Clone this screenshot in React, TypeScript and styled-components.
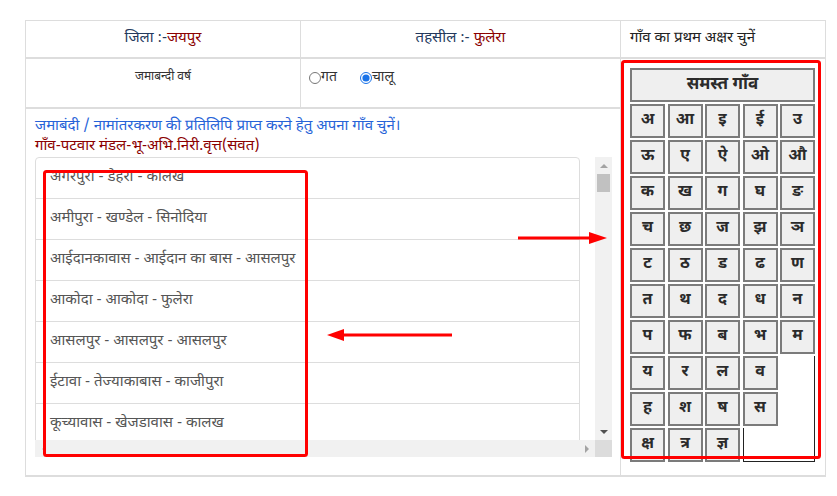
import React from "react";
import styled, { createGlobalStyle } from "styled-components";

const GlobalStyle = createGlobalStyle`
  html, body { margin: 0; padding: 0; background: #ffffff; }
  body {
    font-family: "Noto Sans Devanagari", "Noto Sans", "Liberation Sans", sans-serif;
    color: #333333;
  }
  * { box-sizing: border-box; }
`;

const Page = styled.div`
  position: relative;
  width: 837px;
  height: 496px;
  padding: 20px 0 0 25px;
  overflow: hidden;
`;

const InfoTable = styled.div`
  display: grid;
  grid-template-columns: 275px 320px 204px;
  grid-template-rows: 38px 50px 366px;
  width: 801px;
  border: 1px solid #dddddd;
  border-bottom-width: 2px;
`;

const Cell = styled.div<{ $right?: boolean; $bottom?: boolean }>`
  border-right: ${(p) => (p.$right ? "1px solid #dddddd" : "none")};
  border-bottom: ${(p) => (p.$bottom ? "2px solid #dddddd" : "none")};
  min-width: 0;
`;

const HeadCell = styled(Cell)<{ $align?: "center" | "left" }>`
  display: flex;
  align-items: center;
  justify-content: ${(p) => (p.$align === "left" ? "flex-start" : "center")};
  padding: 0 9px;
  font-size: 15px;
  line-height: 20px;
  color: #222222;
`;

const Label = styled.span`
  color: #23395d;
`;

const Value = styled.span`
  color: #8b0000;
`;

const YearLabelCell = styled(Cell)`
  padding-top: 10px;
  text-align: center;
  font-size: 12px;
  line-height: 17px;
  color: #333333;
`;

const RadioCell = styled(Cell)`
  display: flex;
  align-items: flex-start;
  padding: 10px 0 0 8px;
`;

const RadioLabel = styled.label`
  display: inline-flex;
  align-items: center;
  font-size: 14px;
  line-height: 18px;
  color: #333333;
  margin-right: 23px;

  input {
    margin: 0;
    width: 12px;
    height: 12px;
    accent-color: #1a73e8;
  }
`;

const VillageCell = styled(Cell)`
  grid-column: 1 / 3;
  padding: 8px 8px 0 9px;
  display: flex;
  flex-direction: column;
`;

const Intro = styled.div`
  font-size: 15px;
  line-height: 20px;
  color: #2763d8;
  white-space: nowrap;
`;

const ColumnTitle = styled.div`
  font-size: 15px;
  line-height: 20px;
  color: #8b0000;
  white-space: nowrap;
`;

const ScrollFrame = styled.div`
  display: grid;
  grid-template-columns: 560px 17px;
  grid-template-rows: 283px 17px;
  width: 577px;
  height: 300px;
`;

const Viewport = styled.div`
  overflow: hidden;
`;

const VScrollbar = styled.div`
  display: flex;
  flex-direction: column;
  background: #f1f1f1;
`;

const HScrollbar = styled.div`
  display: flex;
  justify-content: space-between;
  background: #f1f1f1;
`;

const ScrollCorner = styled.div`
  background: #dcdcdc;
`;

const ArrowButton = styled.div`
  flex: 0 0 17px;
  width: 17px;
  height: 17px;
  display: flex;
  align-items: center;
  justify-content: center;
`;

const Track = styled.div`
  flex: 1;
  display: flex;
  flex-direction: column;
`;

const Thumb = styled.div`
  height: 18px;
  margin: 0 2px;
  background: #c1c1c1;
`;

type Dir = "up" | "down" | "left" | "right";

const Triangle = styled.span<{ $dir: Dir; $color: string }>`
  width: 0;
  height: 0;
  border-style: solid;
  border-color: transparent;
  ${(p) =>
    p.$dir === "up"
      ? `border-width: 0 4px 4px 4px; border-bottom-color: ${p.$color};`
      : p.$dir === "down"
      ? `border-width: 4px 4px 0 4px; border-top-color: ${p.$color};`
      : p.$dir === "left"
      ? `border-width: 4px 4px 4px 0; border-right-color: ${p.$color};`
      : `border-width: 4px 0 4px 4px; border-left-color: ${p.$color};`}
`;

const VillageList = styled.ul`
  list-style: none;
  margin: 0;
  padding: 0;
  width: 545px;
`;

const VillageItem = styled.li`
  border: 1px solid #dddddd;
  margin-bottom: -1px;
  padding: 10px 14px;
  font-size: 15px;
  line-height: 20px;
  color: #555555;
  white-space: nowrap;
  background: #ffffff;

  &:first-child {
    border-top-left-radius: 4px;
    border-top-right-radius: 4px;
  }
  &:last-child {
    margin-bottom: 0;
    border-bottom-left-radius: 4px;
    border-bottom-right-radius: 4px;
  }
`;

const LetterCell = styled(Cell)`
  grid-column: 3;
  grid-row: 2 / 4;
  padding: 9px 0 0 9px;
`;

const LetterGrid = styled.div`
  display: grid;
  grid-template-columns: repeat(5, 35px);
  grid-auto-rows: 34px;
  column-gap: 2.5px;
  row-gap: 2px;
  width: 185px;
`;

const LetterButton = styled.button<{ $wide?: boolean }>`
  grid-column: ${(p) => (p.$wide ? "1 / 6" : "auto")};
  margin: 0;
  padding: 0;
  background: #efefef;
  border: 2px solid #7b7b7b;
  font-family: "Noto Sans Devanagari", "Noto Sans", "Liberation Sans", sans-serif;
  font-weight: 700;
  font-size: ${(p) => (p.$wide ? "17px" : "16px")};
  line-height: 1;
  color: #2b2b2b;
  cursor: pointer;
`;

const FillerColumn = styled.div`
  grid-column: 5;
  grid-row: 9 / 12;
  border-right: 1px solid #222222;
`;

const FillerCorner = styled.div`
  grid-column: 4 / 6;
  grid-row: 11;
  border-left: 1px solid #222222;
  border-bottom: 1px solid #222222;
`;

const Annotations = styled.svg`
  position: absolute;
  left: 0;
  top: 0;
  width: 837px;
  height: 496px;
  pointer-events: none;
`;

const letters: string[] = [
  "अ", "आ", "इ", "ई", "उ",
  "ऊ", "ए", "ऐ", "ओ", "औ",
  "क", "ख", "ग", "घ", "ङ",
  "च", "छ", "ज", "झ", "ञ",
  "ट", "ठ", "ड", "ढ", "ण",
  "त", "थ", "द", "ध", "न",
  "प", "फ", "ब", "भ", "म",
  "य", "र", "ल", "व",
];

const letterRow9 = ["ह", "श", "ष", "स"];
const letterRow10 = ["क्ष", "त्र", "ज्ञ"];

const villages: string[] = [
  "अगरपुरा - डेहरा - कालख",
  "अमीपुरा - खण्डेल - सिनोदिया",
  "आईदानकावास - आईदान का बास - आसलपुर",
  "आकोदा - आकोदा - फुलेरा",
  "आसलपुर - आसलपुर - आसलपुर",
  "ईटावा - तेज्याकाबास - काजीपुरा",
  "कूच्यावास - खेजडावास - कालख",
  "कालख - कालख - कालख",
  "काजीपुरा - काजीपुरा - काजीपुरा",
  "खेजडावास - खेजडावास - कालख",
  "खण्डेल - खण्डेल - सिनोदिया",
  "गोविन्दपुरा - गोविन्दपुरा - फुलेरा",
  "चौमूं खुर्द - हिरनोदा - फुलेरा",
  "जोबनेर - जोबनेर - जोबनेर",
  "डेहरा - डेहरा - कालख",
  "तेज्याकाबास - तेज्याकाबास - काजीपुरा",
  "नरैना - नरैना - नरैना",
  "फुलेरा - फुलेरा - फुलेरा",
  "बधाल - बधाल - सांभर",
  "भादवा - भादवा - आसलपुर",
  "मण्डा - मण्डा - भोजपुरा",
  "रामपुरा - साखुन - नरैना",
  "लोहरवाडा - लोहरवाडा - फुलेरा",
  "सांभर - सांभर - सांभर",
  "सिनोदिया - सिनोदिया - सिनोदिया",
  "हिरनोदा - हिरनोदा - फुलेरा",
  "हबसपुरा - जोबनेर - जोबनेर",
  "बोराज - बोराज - काजीपुरा",
  "साखुन - साखुन - नरैना",
  "भोजपुरा - भोजपुरा - भोजपुरा",
  "माल्यावास - रेनवाल - काजीपुरा",
  "रेनवाल - रेनवाल - काजीपुरा",
  "मूण्डवाडा - मूण्डवाडा - सांभर",
  "ढाणी कुम्हारान - बधाल - सांभर",
  "धानक्या - सिनोदिया - सिनोदिया",
  "देवपुरा - आकोदा - फुलेरा",
  "निमेडा - नरैना - नरैना",
  "पचकोडिया - डेहरा - कालख",
  "बिचून - बिचून - जोबनेर",
  "मोखमपुरा - मोखमपुरा - भोजपुरा",
  "लूणियावास - कालख - कालख",
  "श्यामपुरा - आसलपुर - आसलपुर",
  "सेवापुरा - रेनवाल - काजीपुरा",
  "हरसोली - हरसोली - फुलेरा",
  "कांसेल - कांसेल - सांभर",
  "करणसर - करणसर - जोबनेर",
  "गुढा साल्ट - सांभर - सांभर",
  "चारणवास - खेजडावास - कालख",
  "झपोक - झपोक - नरैना",
  "टोडा - टोडा - भोजपुरा",
  "नांदरिया - नरैना - नरैना",
  "पडासोली - पडासोली - फुलेरा",
  "बासडी - बासडी - सांभर",
  "महलां - महलां - जोबनेर",
  "रूपाहेडी - रूपाहेडी - काजीपुरा",
  "शिवदासपुरा - बिचून - जोबनेर",
  "सालोदिया - सिनोदिया - सिनोदिया",
];

export default function App() {
  return (
    <>
      <GlobalStyle />
      <Page>
        <InfoTable>
          <HeadCell $right $bottom>
            <Label>जिला :-</Label>
            <Value>जयपुर</Value>
          </HeadCell>
          <HeadCell $right $bottom>
            <Label>तहसील :-&nbsp;</Label>
            <Value>फुलेरा</Value>
          </HeadCell>
          <HeadCell $bottom $align="left">
            गाँव का प्रथम अक्षर चुनें
          </HeadCell>

          <YearLabelCell $right $bottom>जमाबन्दी वर्ष</YearLabelCell>
          <RadioCell $right $bottom>
            <RadioLabel>
              <input type="radio" name="year" value="gat" />
              गत
            </RadioLabel>
            <RadioLabel>
              <input type="radio" name="year" value="chalu" defaultChecked />
              चालू
            </RadioLabel>
          </RadioCell>

          <LetterCell>
            <LetterGrid>
              <LetterButton $wide>समस्त गाँव</LetterButton>
              {letters.map((l) => (
                <LetterButton key={l}>{l}</LetterButton>
              ))}
              <FillerColumn />
              {letterRow9.map((l) => (
                <LetterButton key={l}>{l}</LetterButton>
              ))}
              <FillerCorner />
              {letterRow10.map((l) => (
                <LetterButton key={l}>{l}</LetterButton>
              ))}
            </LetterGrid>
          </LetterCell>

          <VillageCell $right>
            <Intro>जमाबंदी / नामांतरकरण की प्रतिलिपि प्राप्त करने हेतु अपना गाँव चुनें।</Intro>
            <ColumnTitle>गाँव-पटवार मंडल-भू-अभि.निरी.वृत्त(संवत)</ColumnTitle>
            <ScrollFrame>
              <Viewport>
                <VillageList>
                  {villages.map((v) => (
                    <VillageItem key={v}>{v}</VillageItem>
                  ))}
                </VillageList>
              </Viewport>
              <VScrollbar>
                <ArrowButton>
                  <Triangle $dir="up" $color="#a3a3a3" />
                </ArrowButton>
                <Track>
                  <Thumb />
                </Track>
                <ArrowButton>
                  <Triangle $dir="down" $color="#505050" />
                </ArrowButton>
              </VScrollbar>
              <HScrollbar>
                <ArrowButton>
                  <Triangle $dir="left" $color="#c8c8c8" />
                </ArrowButton>
                <ArrowButton>
                  <Triangle $dir="right" $color="#a3a3a3" />
                </ArrowButton>
              </HScrollbar>
              <ScrollCorner />
            </ScrollFrame>
          </VillageCell>
        </InfoTable>

        <Annotations viewBox="0 0 837 496">
          <rect x="44.5" y="171.5" width="262" height="284" rx="2" fill="none" stroke="#ff0000" strokeWidth="3" />
          <rect x="622.5" y="61.5" width="197" height="396" rx="2" fill="none" stroke="#ff0000" strokeWidth="3" />
          <line x1="518" y1="238" x2="592" y2="238" stroke="#ff0000" strokeWidth="3" />
          <polygon points="589,232 607,238 589,244" fill="#ff0000" />
          <line x1="452" y1="335" x2="342" y2="335" stroke="#ff0000" strokeWidth="3" />
          <polygon points="344,329 327,335 344,341" fill="#ff0000" />
        </Annotations>
      </Page>
    </>
  );
}
